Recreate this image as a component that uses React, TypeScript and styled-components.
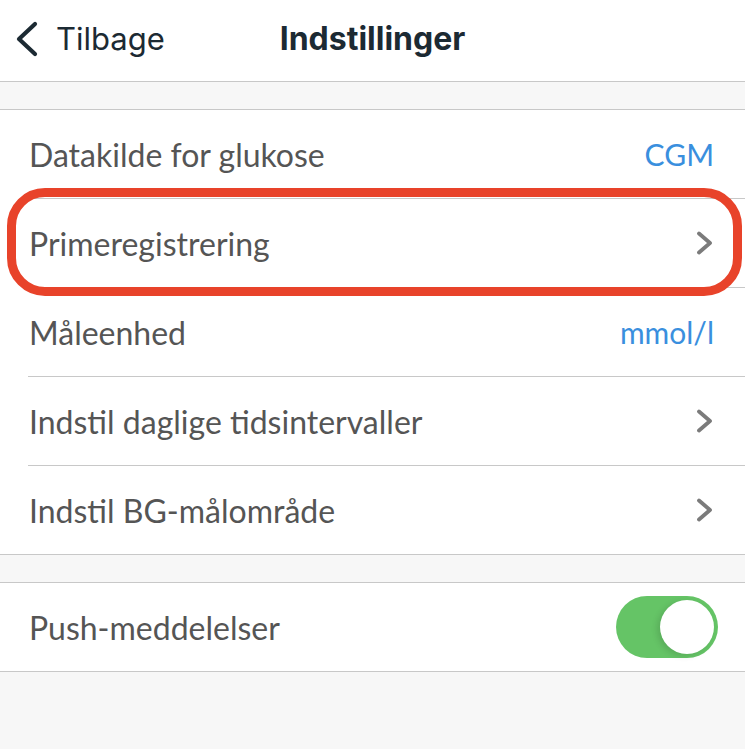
import styled, { createGlobalStyle } from "styled-components";

const GlobalStyle = createGlobalStyle`
  html, body {
    margin: 0;
    padding: 0;
    background: #f7f7f7;
  }
  * {
    box-sizing: border-box;
  }
`;

const Page = styled.div`
  min-height: 100vh;
  background: #f7f7f7;
  font-family: Lato, "Open Sans", sans-serif;
`;

const Header = styled.header`
  height: 82px;
  background: #ffffff;
  border-bottom: 1px solid #c8c8c8;
  display: grid;
  grid-template-columns: 1fr auto 1fr;
  align-items: center;
  font-family: Inter, "Liberation Sans", sans-serif;
  color: #1c2a33;
`;

const BackButton = styled.button`
  justify-self: start;
  display: flex;
  align-items: center;
  gap: 17px;
  padding: 0 0 4px 15px;
  border: none;
  background: none;
  font: inherit;
  font-size: 31px;
  color: inherit;
`;

const Title = styled.h1`
  margin: 0 0 4px;
  font-size: 32px;
  font-weight: 700;
`;

const Spacer = styled.div`
  height: 27px;
`;

const Group = styled.section`
  background: #ffffff;
  border-top: 1px solid #c8c8c8;
  border-bottom: 1px solid #c8c8c8;
`;

const Row = styled.div<{ $last?: boolean }>`
  position: relative;
  height: ${(p) => (p.$last ? "88px" : "89px")};
  margin-left: 28px;
  padding: 0 31px 0 1px;
  display: flex;
  align-items: center;
  justify-content: space-between;
  border-bottom: ${(p) => (p.$last ? "none" : "1px solid #c8c8c8")};
`;

const Label = styled.span`
  font-size: 32px;
  color: #555555;
`;

const Value = styled.span`
  font-size: 30px;
  color: #3a8fde;
`;

const Highlight = styled.div`
  position: absolute;
  top: -11px;
  left: -21px;
  right: 3px;
  bottom: -9px;
  border: 9px solid #e8432a;
  border-radius: 38px;
  pointer-events: none;
`;

const Toggle = styled.div<{ $on: boolean }>`
  width: 102px;
  height: 62px;
  margin-right: -4px;
  border-radius: 31px;
  background: ${(p) => (p.$on ? "#65c466" : "#e5e5e5")};
  display: flex;
  align-items: center;
  justify-content: ${(p) => (p.$on ? "flex-end" : "flex-start")};
  padding: 0 4px;
`;

const Knob = styled.div`
  width: 54px;
  height: 54px;
  border-radius: 50%;
  background: #ffffff;
  box-shadow: -3px 2px 6px rgba(0, 0, 0, 0.12);
`;

const Chevron = () => (
  <svg width="18" height="24" viewBox="0 0 18 24">
    <polyline
      points="3,2.5 14,12 3,21.5"
      fill="none"
      stroke="#7b7b7b"
      strokeWidth="3.8"
      strokeLinecap="round"
      strokeLinejoin="round"
    />
  </svg>
);

const BackIcon = () => (
  <svg width="24" height="36" viewBox="0 0 24 36">
    <polyline
      points="20,3 4,18 20,33"
      fill="none"
      stroke="#1c2a33"
      strokeWidth="4.2"
      strokeLinecap="round"
      strokeLinejoin="round"
    />
  </svg>
);

interface SettingItem {
  label: string;
  value?: string;
  chevron?: boolean;
  highlight?: boolean;
}

const settings: SettingItem[] = [
  { label: "Datakilde for glukose", value: "CGM" },
  { label: "Primeregistrering", chevron: true, highlight: true },
  { label: "Måleenhed", value: "mmol/l" },
  { label: "Indstil daglige tidsintervaller", chevron: true },
  { label: "Indstil BG-målområde", chevron: true },
];

const App = () => {
  return (
    <Page>
      <GlobalStyle />
      <Header>
        <BackButton type="button">
          <BackIcon />
          Tilbage
        </BackButton>
        <Title>Indstillinger</Title>
        <div />
      </Header>
      <Spacer />
      <Group>
        {settings.map((item, index) => (
          <Row key={item.label} $last={index === settings.length - 1}>
            <Label>{item.label}</Label>
            {item.value && <Value>{item.value}</Value>}
            {item.chevron && <Chevron />}
            {item.highlight && <Highlight />}
          </Row>
        ))}
      </Group>
      <Spacer />
      <Group>
        <Row $last>
          <Label>Push-meddelelser</Label>
          <Toggle $on>
            <Knob />
          </Toggle>
        </Row>
      </Group>
    </Page>
  );
};

export default App;
